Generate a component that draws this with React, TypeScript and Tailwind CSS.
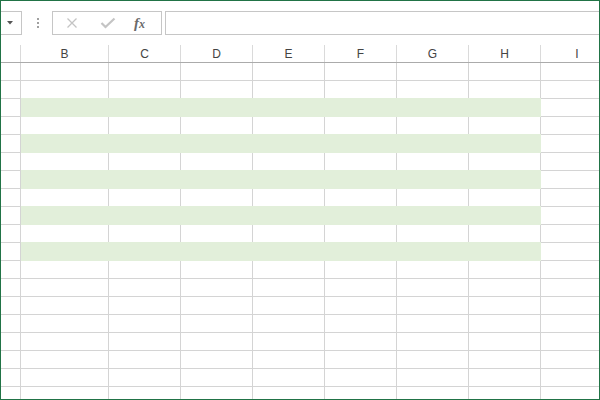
const cols = ["B", "C", "D", "E", "F", "G", "H"];
const widths = ["w-[88px]", "w-[72px]", "w-[72px]", "w-[72px]", "w-[72px]", "w-[72px]", "w-[72px]"];
const rows = Array.from({ length: 19 }, (_, i) => i);

function Row({ green }: { green: boolean }) {
    return (
        <div className="flex h-[18px] shrink-0">
            <div className="w-[20px] shrink-0 border-r border-b border-[#d4d4d4]" />
            {green ? (
                <div className="-mt-px h-[19px] w-[520px] shrink-0 bg-[#e2efda]" />
            ) : (
                widths.map((w, i) => (
                    <div key={i} className={`${w} shrink-0 border-r border-b border-[#d4d4d4]`} />
                ))
            )}
            <div className="w-[72px] shrink-0 border-b border-[#d4d4d4]" />
        </div>
    );
}

export default function App() {
    return (
        <div
            className="flex h-[400px] w-[600px] flex-col overflow-hidden border border-[#217346] bg-white"
            style={{ fontFamily: '"Liberation Sans", Arial, sans-serif' }}
        >
            {/* formula bar */}
            <div className="flex h-[43px] shrink-0 items-start pt-[10px]">
                <div className="flex h-[24px] w-[21px] shrink-0 items-center justify-center border-y border-r border-[#c6c6c6]">
                    <svg width="6" height="4" viewBox="0 0 6 4" className="-ml-[2px]">
                        <path d="M0 0H6L3 3.5Z" fill="#555" />
                    </svg>
                </div>
                <div className="ml-[14px] flex h-[24px] w-[3px] flex-col items-center justify-center gap-[2px]">
                    <span className="h-[2px] w-[2px] bg-[#a0a0a0]" />
                    <span className="h-[2px] w-[2px] bg-[#a0a0a0]" />
                    <span className="h-[2px] w-[2px] bg-[#a0a0a0]" />
                </div>
                <div className="ml-[13px] flex h-[24px] w-[110px] shrink-0 items-center border border-[#c6c6c6]">
                    <svg width="12" height="12" viewBox="0 0 12 12" className="ml-[13px]">
                        <path d="M1.5 1.5L10.5 10.5M10.5 1.5L1.5 10.5" stroke="#c4c4c4" strokeWidth="1.3" />
                    </svg>
                    <svg width="16" height="12" viewBox="0 0 16 12" className="ml-[22px]">
                        <path d="M1.5 6L5.5 10L14.5 1.5" stroke="#c4c4c4" strokeWidth="2.2" fill="none" />
                    </svg>
                    <span
                        className="ml-[18px] text-[15px] font-bold italic leading-none text-[#6a6a6a]"
                        style={{ fontFamily: '"Liberation Serif", "Times New Roman", serif' }}
                    >
                        f<span className="text-[12px]">x</span>
                    </span>
                </div>
                <div className="ml-[3px] h-[24px] flex-1 border-y border-l border-[#c6c6c6]" />
            </div>

            {/* column headers */}
            <div className="flex h-[19px] shrink-0 border-b border-[#ababab] text-[12px] text-[#444]">
                <div className="mt-px w-[20px] shrink-0 border-r border-[#dadada]" />
                {cols.map((c, i) => (
                    <div
                        key={c}
                        className={`${widths[i]} mt-px flex shrink-0 items-center justify-center border-r border-[#dadada]`}
                    >
                        {c}
                    </div>
                ))}
                <div className="mt-px flex w-[72px] shrink-0 items-center justify-center">I</div>
            </div>

            {/* cells */}
            {rows.map((r) => (
                <Row key={r} green={r % 2 === 0 && r >= 2 && r <= 10} />
            ))}
        </div>
    );
}
